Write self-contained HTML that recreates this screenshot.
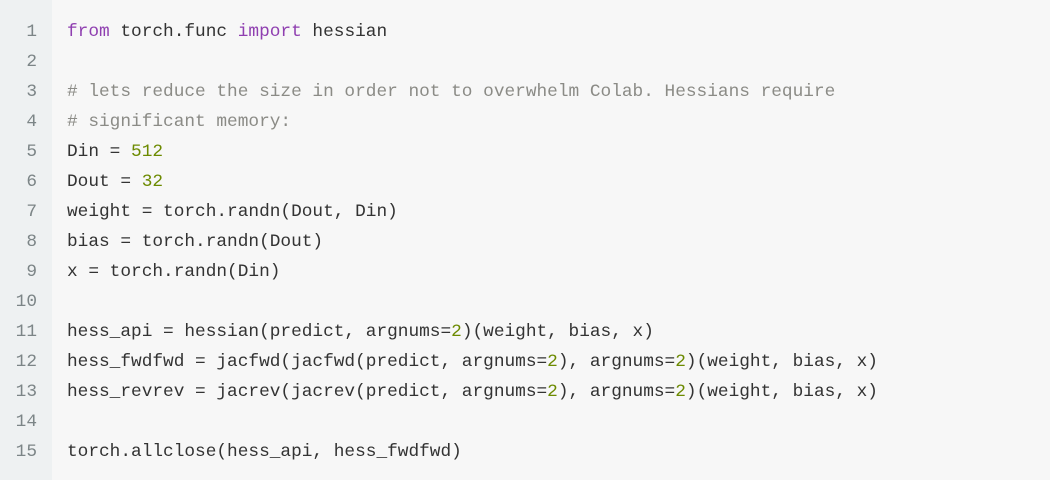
<!DOCTYPE html>
<html><head><meta charset="utf-8"><style>
html,body{margin:0;padding:0;width:1050px;height:480px;overflow:hidden;background:#f7f7f7;}
.wrap{position:relative;width:1050px;height:480px;background:#f7f7f7;}
.gut{position:absolute;left:0;top:0;width:52px;height:480px;background:#eef1f2;}
.ln{position:absolute;left:0;width:37px;text-align:right;color:#7c8587;}
.cd{position:absolute;left:67px;color:#333;white-space:pre;}
.ln,.cd{font-family:"Liberation Mono",monospace;font-size:17.8px;line-height:30px;}
.k{color:#8f3fb0}.c{color:#8b8b86}.n{color:#6c8a00}
</style></head><body><div class="wrap"><div class="gut"></div>
<div class="ln" style="top:17px">1<br>2<br>3<br>4<br>5<br>6<br>7<br>8<br>9<br>10<br>11<br>12<br>13<br>14<br>15</div>
<div class="cd" style="top:17px"><span class="k">from</span> torch.func <span class="k">import</span> hessian

<span class="c"># lets reduce the size in order not to overwhelm Colab. Hessians require</span>
<span class="c"># significant memory:</span>
Din = <span class="n">512</span>
Dout = <span class="n">32</span>
weight = torch.randn(Dout, Din)
bias = torch.randn(Dout)
x = torch.randn(Din)

hess_api = hessian(predict, argnums=<span class="n">2</span>)(weight, bias, x)
hess_fwdfwd = jacfwd(jacfwd(predict, argnums=<span class="n">2</span>), argnums=<span class="n">2</span>)(weight, bias, x)
hess_revrev = jacrev(jacrev(predict, argnums=<span class="n">2</span>), argnums=<span class="n">2</span>)(weight, bias, x)

torch.allclose(hess_api, hess_fwdfwd)</div>
</div></body></html>
